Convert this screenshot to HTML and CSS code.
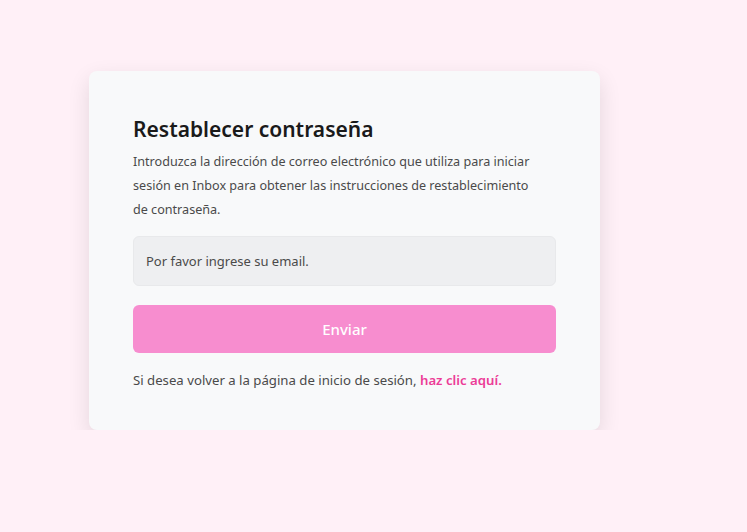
FILE: index.html
```html
<!DOCTYPE html>
<html lang="es">
<head>
  <meta charset="UTF-8">
  <meta name="viewport" content="width=device-width, initial-scale=1.0">
  <title>Restablecer contraseña</title>
  <link rel="stylesheet" href="styles.css">
</head>
<body>
  <div class="page">
    <div class="card">
      <h1>Restablecer contraseña</h1>
      <p class="intro">Introduzca la dirección de correo electrónico que utiliza para iniciar sesión en Inbox para obtener las instrucciones de restablecimiento de contraseña.</p>
      <form class="reset-form" onsubmit="return false">
        <input type="email" class="email-input" placeholder="Por favor ingrese su email.">
        <button type="submit" class="send-button">Enviar</button>
      </form>
      <p class="back-text">Si desea volver a la página de inicio de sesión, <a href="#" class="back-link">haz clic aquí.</a></p>
    </div>
  </div>
</body>
</html>
```

FILE: styles.css
```css
body {
  margin: 0;
  padding: 0;
  background-color: #fff0f7;
  font-family: "Noto Sans", "Open Sans", Arial, sans-serif;
  color: #4a4a4a;
}

.page {
  padding: 71px 0 0 89px;
}

.card {
  width: 511px;
  box-sizing: border-box;
  padding: 42px 44px 38px;
  background-color: #f8f9fa;
  border-radius: 8px;
  box-shadow: 0 8px 22px rgba(0, 0, 0, 0.11);
}

h1 {
  margin: 0;
  font-size: 21px;
  font-weight: 600;
  line-height: 32px;
  color: #1a1a1a;
}

.intro {
  margin: 5px 0 14px;
  padding-right: 10px;
  font-size: 12.6px;
  line-height: 24px;
  color: #4a4a4a;
}

.reset-form {
  display: flex;
  flex-direction: column;
  gap: 19px;
}

.email-input {
  box-sizing: border-box;
  height: 50px;
  padding: 0 12px;
  border: 1px solid #e8e9eb;
  border-radius: 6px;
  background-color: #eeeff1;
  font-family: inherit;
  font-size: 13px;
  color: #333;
  outline: none;
}

.email-input::placeholder {
  color: #4a4a4a;
}

.send-button {
  height: 48px;
  border: none;
  border-radius: 6px;
  background-color: #f78dcf;
  color: #fff;
  font-family: inherit;
  font-size: 15px;
  font-weight: 500;
  cursor: pointer;
}

.back-text {
  margin: 15px 0 0;
  font-size: 13.2px;
  line-height: 24px;
}

.back-link {
  color: #ec3c97;
  font-weight: 600;
  text-decoration: none;
}
```
